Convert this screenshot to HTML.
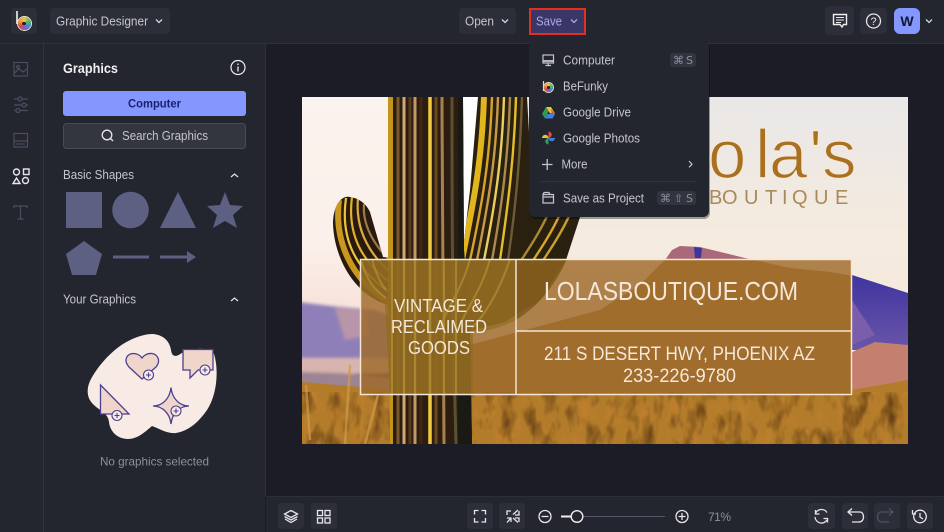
<!DOCTYPE html>
<html><head><meta charset="utf-8"><title>Graphic Designer</title>
<style>
html,body{margin:0;padding:0;background:#1b1c25;width:944px;height:532px;overflow:hidden}
svg{position:absolute;left:0;top:0;display:block}
text{font-family:"Liberation Sans",sans-serif}
.c{position:absolute;border-radius:50%;background:conic-gradient(#e8c84a,#5cb85c,#3f8fd8,#8a5cc0,#e8483f,#f0a030,#e8c84a)}
.c i{position:absolute;border-radius:50%;background:#222;left:35%;top:35%;width:30%;height:30%}
</style></head><body>
<svg width="944" height="532" viewBox="0 0 944 532" xmlns="http://www.w3.org/2000/svg">
<defs>
<linearGradient id="skyL" x1="0" y1="0" x2="0" y2="1"><stop offset="0" stop-color="#fbf3ee"/><stop offset=".55" stop-color="#fbf0ea"/><stop offset="1" stop-color="#f4d6cc"/></linearGradient>
<linearGradient id="skyR" x1="0" y1="0" x2="0" y2="1"><stop offset="0" stop-color="#e9e7e7"/><stop offset=".5" stop-color="#f5ebdf"/><stop offset="1" stop-color="#f6e9db"/></linearGradient>
<linearGradient id="blue" x1="0" y1="0" x2="0" y2="1"><stop offset="0" stop-color="#3f35a0"/><stop offset="1" stop-color="#6a55a8"/></linearGradient>
<filter id="gr" x="0" y="0" width="100%" height="100%" color-interpolation-filters="sRGB"><feTurbulence type="fractalNoise" baseFrequency=".07 .035" numOctaves="3" seed="5"/><feColorMatrix values="0 0 0 0 .42  0 0 0 0 .26  0 0 0 0 .08  0 0 0 2.500 -1.150"/></filter>
<filter id="gl" x="0" y="0" width="100%" height="100%" color-interpolation-filters="sRGB"><feTurbulence type="fractalNoise" baseFrequency=".09 .04" numOctaves="2" seed="11"/><feColorMatrix values="0 0 0 0 .76  0 0 0 0 .5  0 0 0 0 .18  0 0 0 2.500 -1.200"/></filter>
<filter id="bl"><feGaussianBlur stdDeviation="1.500"/></filter>
<clipPath id="pic"><rect x="302" y="97" width="606" height="347"/></clipPath>
<clipPath id="ov"><rect x="360" y="259" width="492" height="136"/></clipPath>
<clipPath id="trunk"><path d="M388 97H463L464 250L470 330L472 444H390L388 300Z"/></clipPath>
<clipPath id="rarm"><path d="M478 97H527L530 150L560 190L581 214L566 260L540 300L505 322L466 332L460 300L463 250L470 190Z"/></clipPath>
<clipPath id="larm"><path d="M350 197C340 195 333 208 333 224C334 255 352 296 392 306V258L383 257L370 212C366 203 358 198 350 197Z"/></clipPath>
</defs>

<rect width="944" height="532" fill="#1b1c25"/>

<!-- picture -->
<g clip-path="url(#pic)">
<rect x="302" y="97" width="180" height="270" fill="url(#skyL)"/>
<rect x="470" y="97" width="438" height="270" fill="url(#skyR)"/>
<rect x="463" y="97" width="30" height="170" fill="#fff"/>
<!-- left mountains -->
<g filter="url(#bl)">
<path d="M298 302L340 307L375 310L400 320V362H298Z" fill="#8f7fb8"/>
<path d="M335 308L365 310L370 335L345 340Z" fill="#b895a8"/>
<rect x="298" y="358" width="104" height="16" fill="#d8b4ae"/>
<path d="M298 372L340 373L400 378V400H298Z" fill="#9c8492"/>
</g>
<!-- right mountains -->
<path d="M470 345L600 310L640 285L665 260L672 250L680 246L700 247L745 258L790 268L830 272L852 276V400H470Z" fill="#a9697a"/>
<path d="M470 345L600 310L640 285L665 260H745L790 268L830 272L852 276V400H470Z" fill="#ab7a3c"/>
<path d="M694 247L702 248L701 258H695Z" fill="#3f35a0"/>
<path d="M852 275L908 293V350H852Z" fill="url(#blue)"/>
<path d="M852 352L875 342L908 345V395H852Z" fill="#c47f6e"/>
<path d="M852 300L875 335L852 345Z" fill="#7a5eab"/>
<!-- grass -->
<path d="M302 382L420 392L480 392L852 390L908 380V444H302Z" fill="#b27c2a"/>
<rect x="302" y="392" width="606" height="52" filter="url(#gl)"/>
<rect x="302" y="392" width="606" height="52" filter="url(#gr)"/>
<g stroke="#d09a4a" stroke-width="2.500" fill="none" opacity=".7"><path d="M310 440L306 385M345 444L350 365M365 444L378 395"/></g>

<!-- cactus -->
<g clip-path="url(#larm)"><rect x="325" y="190" width="80" height="125" fill="#2a1a0d"/>
<g fill="none" stroke-width="2.200">
<path d="M339 200C334 240 350 280 392 304" stroke="#c9961f" stroke-width="6"/>
<path d="M346 198C340 240 356 270 392 294" stroke="#e8c53a"/>
<path d="M352 197C347 235 362 262 392 284" stroke="#e0b030"/>
<path d="M358 198C355 230 370 255 392 274" stroke="#d8ac45"/>
<path d="M364 204C362 228 378 250 392 262" stroke="#9a7a4a"/></g></g>

<g clip-path="url(#rarm)"><rect x="455" y="97" width="130" height="240" fill="#2a2010"/>
<g fill="none" stroke-width="2.400">
<path d="M484 97C482 160 474 200 462 260" stroke="#e2b41e" stroke-width="6"/>
<path d="M492 97C490 160 482 205 470 260" stroke="#d9a32a"/>
<path d="M498 97C496 160 488 205 477 260" stroke="#c79a4a"/>
<path d="M504 97C502 160 495 205 484 260" stroke="#e9cf60"/>
<path d="M510 97C508 160 502 205 492 260" stroke="#a98a50"/>
<path d="M516 97C514 160 508 205 500 260" stroke="#e3bd2c"/>
<path d="M522 97C520 160 516 205 508 260" stroke="#6d5a38"/>
<path d="M560 214C552 232 540 250 530 265" stroke="#d6a52a"/>
<path d="M570 214C562 232 550 250 540 265" stroke="#caa030"/>
<path d="M548 214C540 232 528 250 518 265" stroke="#a98834"/></g></g>

<g clip-path="url(#trunk)"><rect x="380" y="97" width="100" height="347" fill="#2c1d10"/>
<rect x="388" y="97" width="5" height="347" fill="#c2951c"/>
<g fill="none" stroke-width="3">
<path d="M398 97V444" stroke="#7a5a2c"/>
<path d="M404 97V444" stroke="#cfa974"/>
<path d="M410 97V444" stroke="#5a3a1a"/>
<path d="M415 97V444" stroke="#c19a6a"/>
<path d="M421 97V444" stroke="#3f2812"/>
<path d="M430 97V444" stroke="#f0cc3a" stroke-width="3.500"/>
<path d="M436 97V444" stroke="#6b4a1f"/>
<path d="M442 97C442 200 444 300 444 444" stroke="#a5824f"/>
<path d="M452 97C452 200 452 300 456 444" stroke="#5a5134"/>
</g>
<rect x="458" y="97" width="16" height="347" fill="#1a1a14"/></g>

<!-- overlay -->
<path d="M360 259H852V395H360Z" fill="#9f6a2a" fill-opacity=".82"/>
<g clip-path="url(#ov)">
<path d="M360 259H567C555 285 540 305 516 320C500 328 488 331 473 333V395H390L385 303L372 297L360 290Z" fill="#8a6a1e" opacity=".6"/>
<path d="M516 259H567C555 285 540 305 516 320Z" fill="#6f4c16" opacity=".45"/>
<g fill="none" stroke="#b8983a" stroke-width="2" opacity=".6">
<path d="M392 259V395M404 259V395M415 259V395M430 259V395M444 259V395M456 259V395"/>
<path d="M470 259C462 290 445 310 440 330M490 259C482 290 465 310 458 330M510 259C500 290 485 315 472 328"/>
<path d="M362 262C366 280 375 290 386 298M372 259C376 275 382 285 386 290"/>
</g>
</g>
<path d="M360.500 259.500H851.500V394.500H360.500ZM516 259.500V394.500M516 331H851.500" fill="none" stroke="#f3e6d4" stroke-width="1.500"/>
<g fill="#f4e8da">
<text x="394" y="312" font-size="18" textLength="89" lengthAdjust="spacingAndGlyphs">VINTAGE &amp;</text>
<text x="391" y="333" font-size="18" textLength="96" lengthAdjust="spacingAndGlyphs">RECLAIMED</text>
<text x="408" y="354" font-size="18" textLength="62" lengthAdjust="spacingAndGlyphs">GOODS</text>
<text x="544" y="300" font-size="26" textLength="254" lengthAdjust="spacingAndGlyphs">LOLASBOUTIQUE.COM</text>
<text x="544" y="360" font-size="19.500" textLength="271" lengthAdjust="spacingAndGlyphs">211 S DESERT HWY, PHOENIX AZ</text>
<text x="623" y="382" font-size="19.500" textLength="113" lengthAdjust="spacingAndGlyphs">233-226-9780</text>
</g>
<text x="708 755 769 809 822" y="178" font-size="69" fill="#a9701f" stroke="#f3e8dc" stroke-width="1.300">ola's</text>
<text x="709 722 744 765 782 792 814 835" y="204" font-size="20" fill="#a98a5c">BOUTIQUE</text>
</g>

<!-- top bar -->
<rect width="944" height="43" fill="#23252f"/>
<rect y="43" width="944" height="1" fill="#2e303b"/>
<rect x="11" y="8" width="26" height="26" rx="4" fill="#2c2e39"/>
<path d="M17 11V24" stroke="#fff" stroke-width="1.500" fill="none"/>
<rect x="50" y="8" width="120" height="26" rx="4" fill="#2c2e39"/>
<text x="56" y="25.500" font-size="13" fill="#c5c6cc" textLength="92" lengthAdjust="spacingAndGlyphs">Graphic Designer</text>
<path d="M156 19.500l3 3 3-3" fill="none" stroke="#d5d6da" stroke-width="1.300"/>
<rect x="459" y="8" width="57" height="26" rx="4" fill="#2c2e39"/>
<text x="465" y="25.500" font-size="13" fill="#c5c6cc" textLength="29" lengthAdjust="spacingAndGlyphs">Open</text>
<path d="M502 19.500l3 3 3-3" fill="none" stroke="#d5d6da" stroke-width="1.300"/>
<rect x="530" y="9" width="55" height="25" fill="#3a3768" stroke="#e0301e" stroke-width="2"/>
<text x="536" y="25.500" font-size="13" fill="#a9aae6" textLength="26" lengthAdjust="spacingAndGlyphs">Save</text>
<path d="M571 19.500l3 3 3-3" fill="none" stroke="#a9aae6" stroke-width="1.300"/>
<!-- top right -->
<rect x="825" y="6" width="29" height="29" rx="4" fill="#2c2e39"/>
<path d="M833.500 14.500H846.500V24.500H843.500L842 27L840 24.500H833.500Z" fill="none" stroke="#eee" stroke-width="1.400"/>
<path d="M836 17.500H844M836 20H844M836 22.500H841" stroke="#eee" stroke-width="1"/>
<rect x="860" y="8" width="27" height="26" rx="4" fill="#2c2e39"/>
<circle cx="873.500" cy="21" r="7" fill="none" stroke="#e4e4e8" stroke-width="1.300"/>
<text x="873.500" y="25" font-size="11" fill="#e4e4e8" text-anchor="middle">?</text>
<rect x="894" y="8" width="26" height="26" rx="6" fill="#8497ff"/>
<text x="907" y="26" font-size="14" font-weight="bold" fill="#14162c" text-anchor="middle">W</text>
<path d="M926 19.500l3 3 3-3" fill="none" stroke="#d5d6da" stroke-width="1.300"/>

<!-- rail + panel -->
<rect y="44" width="265" height="488" fill="#23252f"/>
<rect x="43" y="44" width="1" height="488" fill="#31333e"/>
<rect x="265" y="44" width="1" height="452" fill="#2c2e39"/>
<g fill="none" stroke="#4b4e62" stroke-width="1.200">
<rect x="14" y="62.500" width="13.500" height="13.500"/>
<circle cx="18" cy="67" r="1.500"/><path d="M14.500 73L19 69L23 72L27 69"/>
<path d="M14 99H28M14 105H28M14 110.500H28"/>
<circle cx="20" cy="99" r="2" fill="#23252f"/><circle cx="24" cy="105" r="2" fill="#23252f"/><circle cx="18" cy="110.500" r="2" fill="#23252f"/>
<rect x="14" y="133.500" width="13.500" height="13.500"/><path d="M14 141H27.500M16.500 144H25"/>
<path d="M14 208V206H27V208M20.500 206V219M17.500 219H23.500"/>
</g>
<g fill="none" stroke="#e8e8ec" stroke-width="1.400">
<circle cx="16.500" cy="172" r="3"/><rect x="23.500" y="169" width="5.500" height="5.500"/>
<path d="M16.500 178L20 183.500H13Z"/><circle cx="25.500" cy="180.500" r="3"/>
</g>

<text x="63" y="73" font-size="14" font-weight="bold" fill="#f0f0f2" textLength="55" lengthAdjust="spacingAndGlyphs">Graphics</text>
<circle cx="238" cy="67.500" r="7" fill="none" stroke="#eee" stroke-width="1.200"/>
<path d="M238 66.500V71.500M238 63.500V65" stroke="#eee" stroke-width="1.300"/>
<rect x="63" y="91" width="183" height="25" rx="3" fill="#8497ff"/>
<text x="154.500" y="107.500" font-size="12" font-weight="bold" fill="#1d2170" text-anchor="middle" textLength="53" lengthAdjust="spacingAndGlyphs">Computer</text>
<rect x="63.500" y="123.500" width="182" height="25" rx="3" fill="#33353f" stroke="#484a5c"/>
<circle cx="107" cy="135" r="4.800" fill="none" stroke="#e6e6ea" stroke-width="1.300"/><path d="M110.500 138.500L113 141" stroke="#e6e6ea" stroke-width="1.300"/>
<text x="122" y="140" font-size="12.500" fill="#c5c6cc" textLength="86" lengthAdjust="spacingAndGlyphs">Search Graphics</text>
<text x="63" y="179" font-size="12.500" fill="#c5c6cc" textLength="71" lengthAdjust="spacingAndGlyphs">Basic Shapes</text>
<path d="M231 177l3.500-3 3.500 3" fill="none" stroke="#e6e6ea" stroke-width="1.200"/>
<g fill="#5d5f83">
<rect x="66" y="192" width="36" height="36"/>
<circle cx="130.500" cy="210" r="18.300"/>
<path d="M178 192L196 228H160Z"/>
<path d="M225 192L230 205L243 206L233 215L237 228L225 221L213 228L217 215L207 206L220 205Z"/>
<path d="M84 241L102 254L96 275H72L66 254Z"/>
<rect x="113" y="255.500" width="36" height="3"/>
<path d="M160 255.500H187V251L196 257L187 263V258.500H160Z"/>
</g>
<text x="63" y="303.500" font-size="12.500" fill="#c5c6cc" textLength="73" lengthAdjust="spacingAndGlyphs">Your Graphics</text>
<path d="M231 301l3.500-3 3.500 3" fill="none" stroke="#e6e6ea" stroke-width="1.200"/>
<!-- blob -->
<path d="M153 334C165 335 170 343 171 350C172 358 177 357 183 352C195 348 212 347 214 354C219 370 217 395 207 410C198 423 188 431 176 433C167 434 158 428 152 426C146 431 138 439 128 439C118 439 110 432 109 422C108 413 100 411 94 405C87 399 86 390 90 381C98 365 112 351 123 344C133 338 143 334 153 334Z" fill="#f8ebe6"/>
<g fill="#f0d5cb" stroke="#4b3f8f" stroke-width="1.300">
<path d="M142 379L129 367C123 360 127 354 133 353.500C137 353.500 140 355 142 358C144 355 148 353 152 353.500C158 354.500 161 361 156 367Z"/>
<path d="M183 349.500H213V370H198L190 378V370H183Z"/>
<path d="M100.500 385L129 414H100.500Z"/>
<path d="M171 387.500C172 398 179 406 189 406C179 406 172 414 171 424C170 414 163 406 153 406C163 406 170 398 171 387.500Z"/>
</g>
<g fill="#f8ebe6" stroke="#4b3f8f" stroke-width="1.100">
<circle cx="148.500" cy="375" r="5"/><circle cx="205" cy="370" r="5"/><circle cx="117" cy="415.500" r="5"/><circle cx="176" cy="411" r="5"/>
</g>
<path d="M146 375H151M148.500 372.500V377.500M202.500 370H207.500M205 367.500V372.500M114.500 415.500H119.500M117 413V418M173.500 411H178.500M176 408.500V413.500" stroke="#4b3f8f" stroke-width="1.100"/>
<text x="100" y="465.500" font-size="12" fill="#8e8fa0" textLength="109" lengthAdjust="spacingAndGlyphs">No graphics selected</text>

<!-- bottom bar -->
<rect x="266" y="496" width="678" height="36" fill="#23252f"/>
<rect x="266" y="496" width="678" height="1" fill="#2c2e39"/>
<g fill="#2c2e39">
<rect x="278" y="503" width="26" height="26" rx="4"/><rect x="311" y="503" width="26" height="26" rx="4"/>
<rect x="467" y="503" width="26" height="26" rx="4"/><rect x="499" y="503" width="26" height="26" rx="4"/>
<rect x="808" y="503" width="27" height="26" rx="4"/><rect x="842" y="503" width="26" height="26" rx="4"/>
<rect x="874" y="503" width="26" height="26" rx="4"/><rect x="907" y="503" width="26" height="26" rx="4"/>
</g>
<g fill="none" stroke="#e6e6ea" stroke-width="1.300">
<path d="M291 510.500L297.500 514L291 517.500L284.500 514Z"/><path d="M284.500 516.500L291 520L297.500 516.500M285 519L291 522.500L297 519"/>
<rect x="317.500" y="510.500" width="5" height="5"/><rect x="325" y="510.500" width="5" height="5"/><rect x="317.500" y="518" width="5" height="5"/><rect x="325" y="518" width="5" height="5"/>
<path d="M474.500 514.500V510.500H478.500M481.500 510.500H485.500V514.500M485.500 518V522H481.500M478.500 522H474.500V518"/>
<path d="M507 515V511H511M513 514.500L518 510M519 522V518H515M513 518L518 522.500M507 518H511V522M511 518L507 522.500M515 515H519V511"/>
<circle cx="545" cy="516.500" r="6"/><path d="M541.500 516.500H548.500"/>
<circle cx="682" cy="516.500" r="6"/><path d="M678.500 516.500H685.500M682 513V520"/>
<path d="M827 512.500A6.500 6.500 0 0 0 815.500 513.500M815 517A6.500 6.500 0 0 0 827 520M815.500 510V514H819.500M827.500 522.500V518.500H823.500"/>
<path d="M848.500 512H860C862 512 863.500 514 863.500 517C863.500 520 861.500 522 859 522H852M852 508.500L848 512L852 515.500"/>
<circle cx="920" cy="516.500" r="6.300"/><path d="M920 513V517L923 519"/><path d="M912.500 510V514H916"/>
</g>
<path d="M893 512H881C879 512 877.500 514 877.500 517C877.500 520 879.500 522 882 522H889M889 508.500L893 512L889 515.500" fill="none" stroke="#4f5160" stroke-width="1.300"/>
<rect x="577" y="516" width="88" height="1" fill="#54566a"/>
<rect x="561" y="515.500" width="12" height="2" fill="#eee"/>
<circle cx="577" cy="516.500" r="5.800" fill="#23252f" stroke="#eee" stroke-width="1.400"/>
<text x="708" y="521" font-size="12" fill="#8e8fa0" textLength="23" lengthAdjust="spacing">71%</text>

<!-- save menu -->
<rect x="529" y="41" width="180" height="176" rx="6" fill="#000" opacity=".35" transform="translate(1 2)"/>
<rect x="529" y="41" width="180" height="176" rx="6" fill="#23252f"/>
<g font-size="12.500" fill="#c5c6cc">
<text x="563" y="64.500" textLength="52" lengthAdjust="spacingAndGlyphs">Computer</text>
<text x="563" y="90.500" textLength="45" lengthAdjust="spacingAndGlyphs">BeFunky</text>
<text x="563" y="116.500" textLength="68" lengthAdjust="spacingAndGlyphs">Google Drive</text>
<text x="563" y="142.500" textLength="77" lengthAdjust="spacingAndGlyphs">Google Photos</text>
<text x="561.500" y="168.500" textLength="26" lengthAdjust="spacingAndGlyphs">More</text>
<text x="563" y="202.500" textLength="81" lengthAdjust="spacingAndGlyphs">Save as Project</text>
</g>
<rect x="670" y="53" width="26" height="14" rx="3" fill="#32343f"/>
<text x="673" y="64" font-size="11" fill="#8e8fa0" textLength="20" lengthAdjust="spacing" style='font-family:"DejaVu Sans",sans-serif'>⌘ S</text>
<rect x="657" y="191" width="39" height="14" rx="3" fill="#32343f"/>
<text x="660" y="202" font-size="11" fill="#8e8fa0" textLength="33" lengthAdjust="spacing" style='font-family:"DejaVu Sans",sans-serif'>⌘ ⇧ S</text>
<rect x="541" y="181" width="155" height="1" fill="#31333e"/>
<g fill="none" stroke="#c5c6cc" stroke-width="1.200">
<rect x="543" y="55" width="10.500" height="8"/><path d="M543 61H553.500" stroke-width="1.800"/><path d="M548.200 63V65.500M545.500 65.500H551"/>
<path d="M542 164.500H552.500M547.200 159V170" stroke-width="1.300"/>
<path d="M689 161l3 3.200-3 3.200" stroke-width="1.200"/>
<path d="M543 194.500H553.500V203H543ZM543 197H553.500M543 194.500L544 192.500H549L550 194.500"/>
</g>
<path d="M543.500 81V91" stroke="#dcdce0" stroke-width="1.200"/>
<!-- drive -->
<path d="M546 107H551L555 113.500H550Z" fill="#f6c02c"/>
<path d="M546 107L548.500 111.500L545 118.500L542 114Z" fill="#2f9e55"/>
<path d="M545 118.500L547.500 114H555L552.500 118.500Z" fill="#3f7fe8"/>
<path d="M551 109L555 114H552Z" fill="#e8483f"/>
<!-- photos -->
<path d="M548.500 138V131.500A3.250 3.250 0 0 1 548.500 138Z" fill="#e8483f"/>
<path d="M548.500 138H555A3.250 3.250 0 0 1 548.500 138Z" fill="#3f7fe8"/>
<path d="M548.500 138V144.500A3.250 3.250 0 0 1 548.500 138Z" fill="#2f9e55"/>
<path d="M548.500 138H542A3.250 3.250 0 0 1 548.500 138Z" fill="#f6c02c"/>
</svg>
<div class="c" style="left:17.500px;top:17px;width:13px;height:13px;box-shadow:0 0 0 1px #f4e6d0"><i></i></div>
<div class="c" style="left:544px;top:83px;width:9px;height:9px;box-shadow:0 0 0 1px #e8d4c8"><i></i></div>
</body></html>
